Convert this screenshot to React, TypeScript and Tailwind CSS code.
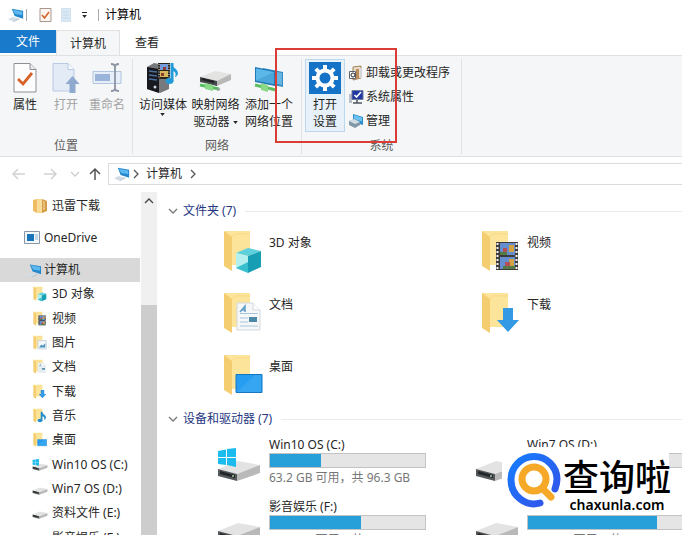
import type { ReactNode } from "react";

type IconProps = { className?: string };

function Monitor({ className = "h-4 w-5" }: IconProps) {
  return (
    <svg viewBox="0 0 20 16" className={className} aria-hidden="true">
      <path d="M5 1.500 17 3.500v8.500L8 9z" fill="#2487cc" />
      <path d="M6 2.500 16 4.200v4L8.500 7z" fill="#5cb8ee" />
      <path d="M1 12.500 6 10l7 2-6 3z" fill="#d3dde5" />
      <path d="M7 15l6-3" stroke="#b4c1cb" strokeWidth="1" />
    </svg>
  );
}

function CheckPage({ className = "h-8 w-6" }: IconProps) {
  return (
    <svg viewBox="0 0 24 32" className={className} aria-hidden="true">
      <path d="M1 1.500h16l6 6V30H1z" fill="#fdfdfd" stroke="#8d9096" />
      <path d="M17 1.500v6h6" fill="#e8eaed" stroke="#8d9096" />
      <path d="M5 17l5 5 9-11" fill="none" stroke="#d86127" strokeWidth="2.800" />
    </svg>
  );
}

function SmallCheck() {
  return (
    <svg viewBox="0 0 13 16" className="h-4 w-[13px]" aria-hidden="true">
      <path d="M1 1.500h11v13H1z" fill="#fdf6f0" stroke="#a8978c" />
      <path d="M3 8l2.500 3L10 5" fill="none" stroke="#d86127" strokeWidth="1.600" />
    </svg>
  );
}

function OpenPage() {
  return (
    <svg viewBox="0 0 28 32" className="h-8 w-7" aria-hidden="true">
      <path d="M1 1.500h15l6 6V29H1z" fill="#e3ebf7" stroke="#b9c9e2" />
      <path d="M16 1.500v6h6" fill="#f6f9fd" stroke="#b9c9e2" />
      <path d="M20.500 14l7 8h-4v9h-6v-9h-4z" fill="#90a9cf" />
    </svg>
  );
}

function RenameIcon() {
  return (
    <svg viewBox="0 0 30 32" className="h-8 w-8" aria-hidden="true">
      <path d="M1 9.500h28v12H1z" fill="#e6eefa" stroke="#b3c5df" />
      <path d="M3 12h15v7H3z" fill="#9bb4d9" />
      <path d="M19 2c3 0 4 1 4 3v21c0 2-1 3-4 3m8-27c-3 0-4 1-4 3m0 21c0 2 1 3 4 3" fill="none" stroke="#8b95a5" strokeWidth="1.800" />
    </svg>
  );
}

function MediaIcon() {
  return (
    <svg viewBox="0 0 34 32" className="h-8 w-[34px]" aria-hidden="true">
      <path d="M1 5 8 1l15 3v23l-9 4L1 27z" fill="#77797d" />
      <path d="M1 5l12 2v24L1 27z" fill="#17191e" />
      <path d="M3 9l8 1M3 13l8 1M3 17l8 1" stroke="#4b6f9d" strokeWidth="1.500" />
      <circle cx="9" cy="25" r="1.500" fill="#ccd4dc" />
      <path d="M12 1h12v16H12z" fill="#28251f" />
      <path d="M14 2h8v6h-8z" fill="#759bdc" />
      <path d="M14 9h8v6h-8z" fill="#d5b85c" />
      <path d="M13 2v14m10-14v14" stroke="#eee" strokeDasharray="1 1.500" />
      <path d="M17 5h3v3h-3zm-2 6h3v3h-3z" fill="#8b3b30" />
      <path d="M26 1v18" stroke="#249bd9" strokeWidth="3" />
      <ellipse cx="23.500" cy="19" rx="4" ry="3" fill="#249bd9" />
      <path d="M25 1c1 5 7 5 7 11-1 2-2 3-3 3 2-5-1-6-4-6z" fill="#249bd9" />
    </svg>
  );
}

function NetDrive() {
  return (
    <svg viewBox="0 0 34 32" className="h-8 w-[34px]" aria-hidden="true">
      <path d="M1 15 16 9l16 3-14 7z" fill="#e3e3e2" />
      <path d="M18 19l14-7v6l-14 6z" fill="#b8b8b7" />
      <path d="M1 15l17 4v5L1 20z" fill="#45484b" />
      <path d="M3 17l12 3" stroke="#1e2021" strokeWidth="2" />
      <path d="M1 23l19 4" stroke="#58bd62" strokeWidth="3" />
      <path d="M6 21l8 2v6l-8-2z" fill="#88d987" />
      <path d="M18 28l3-1" stroke="#9ca4a7" strokeWidth="2" />
    </svg>
  );
}

function NetPlace() {
  return (
    <svg viewBox="0 0 32 32" className="h-8 w-8" aria-hidden="true">
      <path d="M10 6l20 4v15l-20-4z" fill="#348cc6" />
      <path d="M11 7l18 4v12l-18-4z" fill="#66b5e2" />
      <path d="M2 5l20 4v15L2 20z" fill="#2278b4" />
      <path d="M3 6.500l18 3.500v12L3 18.500z" fill="#5cb8e9" />
      <path d="M3 18.500 21 10v12z" fill="#4aa6db" />
      <path d="M2 23l21 5" stroke="#5fbd64" strokeWidth="3" />
      <path d="M8 21l7 2v7l-7-2z" fill="#8bd887" />
    </svg>
  );
}

function Gear() {
  return (
    <svg viewBox="0 0 32 32" className="h-8 w-8" aria-hidden="true">
      <path d="M0 0h32v32H0z" fill="#1473c7" />
      <g fill="#fff">
        <path d="M14 3h4v6h-4zm0 20h4v6h-4zM3 14h6v4H3zm20 0h6v4h-6z" />
        <path d="M14 3h4v6h-4zm0 20h4v6h-4zM3 14h6v4H3zm20 0h6v4h-6z" transform="rotate(45 16 16)" />
      </g>
      <circle cx="16" cy="16" r="7.500" fill="none" stroke="#fff" strokeWidth="4" />
    </svg>
  );
}

function UninstallIcon() {
  return (
    <svg viewBox="0 0 16 16" className="size-4" aria-hidden="true">
      <path d="M5 2 13 1v12l-8 2z" fill="#e8ddcb" stroke="#a5835b" />
      <path d="M8 4h3v10H8z" fill="#bc8b5c" />
      <path d="M1.500 6.500h6v7h-6z" fill="#fff" stroke="#5b6269" />
      <circle cx="5" cy="10" r="2" fill="none" stroke="#25292c" />
      <path d="M13 3v10" stroke="#d2d6d9" strokeWidth="2" />
    </svg>
  );
}

function PropertiesIcon() {
  return (
    <svg viewBox="0 0 16 16" className="size-4" aria-hidden="true">
      <path d="M1 5h3v9H1z" fill="#b9bec8" />
      <path d="M4 1.500h11v9H4z" fill="#2137a3" stroke="#717b9b" />
      <path d="M6.500 6l2 2L13 3" fill="none" stroke="#fff" strokeWidth="1.700" />
      <path d="M9 11v3m-4 0h9" stroke="#4f5460" strokeWidth="1.500" />
    </svg>
  );
}

function ManageIcon() {
  return (
    <svg viewBox="0 0 16 16" className="size-4" aria-hidden="true">
      <path d="M5 1l10 3v8L5 9z" fill="#2d8bca" />
      <path d="M6 2l8 2.500v4L6 6z" fill="#6bc1ed" />
      <path d="M1 8l5-2 6 3v3l-5 3-6-3z" fill="#8198a8" />
      <path d="M1 8l5-2 6 3-5 2z" fill="#d0dce3" />
    </svg>
  );
}

type FolderKind = "cube" | "video" | "doc" | "download" | "desktop" | "picture" | "music";

function Folder({ kind, className = "h-11 w-10" }: { kind: FolderKind; className?: string }) {
  return (
    <svg viewBox="0 0 40 44" className={className} aria-hidden="true">
      <path d="M1 1h26v34H9z" fill="#fce49a" />
      <path d="M1 1l8 6v34L1 36z" fill="#f4cd70" />
      <path d="M9 7 12 4h15" fill="none" stroke="#f8d985" />
      {kind === "cube" && (
        <g>
          <path d="M13 23l12-5 13 3-13 5z" fill="#5dd0dc" />
          <path d="M13 23l12 3v17l-12-5z" fill="#b3f0ef" />
          <path d="M25 26l13-5v16l-13 6z" fill="#159eb4" />
          <path d="M13 38l12-6v11z" fill="#38bfce" />
        </g>
      )}
      {kind === "video" && (
        <g>
          <path d="M15 12h22v28H15z" fill="#3e3c3b" />
          <path d="M19 13h15v12H19zm0 14h15v12H19z" fill="#658ed0" />
          <path d="M28 15h5v7h-5zm0 14h5v7h-5z" fill="#d3a341" />
          <path d="M19 22h7v3h-7zm3 14h12v3H22z" fill="#547b46" />
          <path d="M22 18h4v4h-4zm2 14h5v4h-5z" fill="#b44f58" />
          <path d="M16.500 13v26m19-26v26" stroke="#f5f5f5" strokeWidth="2" strokeDasharray="2" />
        </g>
      )}
      {kind === "doc" && (
        <g>
          <path d="M14 11h16l7 7v20H14z" fill="#f5f7f9" stroke="#d3d9df" />
          <path d="M30 11v7h7" fill="#fff" stroke="#d3d9df" />
          <path d="M17 20l5-6v6m-3-2h3" fill="none" stroke="#5d9fc8" strokeWidth="1.500" />
          <path d="M17 21.500h18M17 26h8m-8 4h8m-8 4h18" stroke="#a9c5d7" />
          <path d="M26 25h8v5h-8z" fill="#4c89a8" />
        </g>
      )}
      {kind === "download" && <path d="M22 16h10v12h6L27 40 16 28h6z" fill="#3499e5" />}
      {kind === "desktop" && (
        <g>
          <path d="M13 20.500h26v18H13z" fill="#269df0" stroke="#1677bf" />
          <path d="M14 38 32 21h6v17z" fill="#48b0f4" opacity=".5" />
        </g>
      )}
      {kind === "picture" && (
        <g>
          <path d="M14 15h24v24H14z" fill="#f3f8fb" stroke="#b5c8d4" strokeWidth="2" />
          <path d="M17 35l7-9 4 4 7-7v12z" fill="#4b91bc" />
        </g>
      )}
      {kind === "music" && (
        <g fill="#248fd0">
          <ellipse cx="20" cy="35" rx="7" ry="5" />
          <path d="M22 10h5c0 8 11 9 10 17-1 4-3 6-5 7 2-8-2-10-5-11v12h-5z" />
        </g>
      )}
    </svg>
  );
}

function Drive({ windows = false, className = "h-[34px] w-[42px]" }: IconProps & { windows?: boolean }) {
  return (
    <svg viewBox="0 0 42 34" className={className} aria-hidden="true">
      <path d="M0 21 20 13l22 4-23 9z" fill="#e3e3e3" />
      <path d="M19 26l23-9v8l-23 8z" fill="#b9b9b9" />
      <path d="M0 21l19 5v7L0 28z" fill="#55585a" />
      <path d="M2 23l15 4v3L2 26z" fill="#242729" />
      <circle cx="15" cy="28" r="1" fill="#a9c9a1" />
      {windows && (
        <path d="M0 3l8-1.500V9H0zm9-2L18 0v9H9zM0 10h8v7l-8-1zm9 0h9v9l-9-2z" fill="#1cbbed" />
      )}
    </svg>
  );
}

function Bundle() {
  return (
    <svg viewBox="0 0 16 16" className="size-4" aria-hidden="true">
      <path d="M1 2l4-1v14l-4-2z" fill="#eebc63" />
      <path d="M5 1h5v14H5z" fill="#f9d88d" />
      <path d="M10 1l5 2v10l-5 2z" fill="#d79b45" />
      <path d="M6 3v10m3-11v12m3-11v9" stroke="#f7e3b3" />
    </svg>
  );
}

function OneDriveIcon() {
  return (
    <svg viewBox="0 0 16 14" className="h-[14px] w-4" aria-hidden="true">
      <path d="M.5.5h15v12H.5z" fill="#f4f7fa" stroke="#8795a4" />
      <path d="M3 3h7v7H3z" fill="#1974b9" />
      <path d="M11 4h3m-3 2h3m-3 2h3" stroke="#93b8d3" />
    </svg>
  );
}

function Chevron({ className = "", d }: { className?: string; d: string }) {
  return (
    <svg viewBox="0 0 10 10" className={`size-[10px] shrink-0 ${className}`} fill="none" stroke="currentColor" strokeWidth="1.300" aria-hidden="true">
      <path d={d} />
    </svg>
  );
}

const right = "M3 1l4 4-4 4";
const down = "M1 3l4 4 4-4";
const up = "M1 7l4-4 4 4";

function Arrow({ d, className = "" }: { d: string; className?: string }) {
  return (
    <svg viewBox="0 0 14 14" className={`size-[14px] ${className}`} fill="none" stroke="currentColor" strokeWidth="1.500" aria-hidden="true">
      <path d={d} />
    </svg>
  );
}

function Triangle() {
  return (
    <svg viewBox="0 0 6 4" className="inline-block h-[3px] w-[5px]" aria-hidden="true">
      <path d="M0 0h6L3 4z" fill="#222" />
    </svg>
  );
}

function BigButton({ icon, children, className = "" }: { icon: ReactNode; children: ReactNode; className?: string }) {
  return (
    <button type="button" className={`flex shrink-0 flex-col items-center gap-[2px] border pt-[2px] leading-[17px] whitespace-nowrap ${className}`}>
      {icon}
      <span>{children}</span>
    </button>
  );
}

function Group({ title, children, className }: { title: string; children: ReactNode; className: string }) {
  return (
    <section className={`flex shrink-0 flex-col border-r border-[#dfe2e5] ${className}`}>
      <div className="flex h-[81px] items-start">{children}</div>
      <h2 className="text-center leading-4 text-[#5d5d5d]">{title}</h2>
    </section>
  );
}

const sideItems: { label: string; icon: ReactNode }[] = [
  { label: "3D 对象", icon: <Folder kind="cube" className="h-4 w-[14px]" /> },
  { label: "视频", icon: <Folder kind="video" className="h-4 w-[14px]" /> },
  { label: "图片", icon: <Folder kind="picture" className="h-4 w-[14px]" /> },
  { label: "文档", icon: <Folder kind="doc" className="h-4 w-[14px]" /> },
  { label: "下载", icon: <Folder kind="download" className="h-4 w-[14px]" /> },
  { label: "音乐", icon: <Folder kind="music" className="h-4 w-[14px]" /> },
  { label: "桌面", icon: <Folder kind="desktop" className="h-4 w-[14px]" /> },
  { label: "Win10 OS (C:)", icon: <Drive windows className="h-3 w-4" /> },
  { label: "Win7 OS (D:)", icon: <Drive className="h-3 w-4" /> },
  { label: "资料文件 (E:)", icon: <Drive className="h-3 w-4" /> },
  { label: "影音娱乐 (F:)", icon: <Drive className="h-3 w-4" /> },
];

const folders: { label: string; kind: FolderKind }[] = [
  { label: "3D 对象", kind: "cube" },
  { label: "视频", kind: "video" },
  { label: "文档", kind: "doc" },
  { label: "下载", kind: "download" },
  { label: "桌面", kind: "desktop" },
];

const drives = [
  { label: "Win10 OS (C:)", used: 33, space: "63.2 GB 可用，共 96.3 GB", windows: true },
  { label: "Win7 OS (D:)", used: 40, space: "", windows: false },
  { label: "影音娱乐 (F:)", used: 59, space: "80.1 GB 可用，共 198 GB", windows: false },
  { label: "", used: 83, space: "9.70 GB 可用，共 88.0 GB", windows: false },
];

function SectionHeader({ children }: { children: ReactNode }) {
  return (
    <h2 className="flex h-5 items-center gap-[5px] text-[#24377f]">
      <Chevron d={down} className="text-[#777]" />
      <span>{children}</span>
      <span className="ml-1 h-px flex-1 bg-[#e9ebee]" />
    </h2>
  );
}

function Watermark() {
  return (
    <div className="absolute right-[13px] bottom-5 flex h-[68px] w-[167px] items-center bg-white pl-[5px]">
      <svg viewBox="0 0 56 60" className="h-[60px] w-14 shrink-0" fill="none" strokeLinecap="round" aria-hidden="true">
        <path d="M33 52C19 56 4 45 4 29a23 23 0 0 1 46-1c0 4-1 7-2 10" stroke="url(#ring)" strokeWidth="7" />
        <circle cx="27" cy="28" r="12" stroke="#f6a928" strokeWidth="7" />
        <path d="M35 37l9 9" stroke="#f6a928" strokeWidth="7" />
        <defs>
          <linearGradient id="ring" x1="0" y1="0" x2="1" y2="1">
            <stop stopColor="#167cff" />
            <stop offset="1" stopColor="#3452e8" />
          </linearGradient>
        </defs>
      </svg>
      <div className="flex flex-1 flex-col items-center pt-[3px] text-black">
        <span className="font-['Noto_Sans_CJK_SC',sans-serif] text-[36px] leading-[44px] font-medium whitespace-nowrap">查询啦</span>
        <span className="text-[14px] leading-[16px] font-semibold">chaxunla.com</span>
      </div>
    </div>
  );
}

export default function App() {
  return (
    <div className="relative flex h-screen flex-col overflow-hidden bg-white font-['Noto_Sans','Noto_Sans_CJK_SC',sans-serif] text-[12px] text-[#262626]">
      <header className="flex h-[30px] shrink-0 items-center pl-[7px]">
        <Monitor className="h-4 w-[19px]" />
        <span className="h-3 w-px bg-[#aaa]" />
        <button type="button" aria-label="属性" className="ml-3"><SmallCheck /></button>
        <button type="button" aria-label="新建" className="ml-[9px]">
          <svg viewBox="0 0 10 14" className="h-[14px] w-[10px]" aria-hidden="true">
            <path d="M.5.5h9v13h-9z" fill="#dbe9f5" stroke="#d0e0ee" />
            <path d="M2 4h6M2 7h6m-6 3h6" stroke="#c2d8ea" />
          </svg>
        </button>
        <button type="button" aria-label="自定义" className="ml-[10px] flex w-[6px] flex-col items-center gap-[2px]">
          <span className="h-px w-[5px] bg-[#222]" />
          <Triangle />
        </button>
        <span className="ml-[11px] h-3 w-px bg-[#aaa]" />
        <h1 className="ml-[6px] text-black">计算机</h1>
      </header>

      <nav className="flex h-[25px] shrink-0 items-start">
        <button type="button" className="h-[23px] w-14 bg-[#1979ca] pt-px text-white">文件</button>
        <button type="button" className="h-[26px] w-16 border border-b-0 border-[#dfe2e5] bg-[#f5f6f7]">计算机</button>
        <button type="button" className="h-[25px] w-[54px]">查看</button>
      </nav>

      <div className="flex h-[102px] shrink-0 border-y border-[#dfe2e5] bg-[#f5f6f7] pt-[3px] pb-[2px]">
        <Group title="位置" className="w-[133px]">
          <BigButton icon={<CheckPage />} className="ml-[5px] w-10 border-transparent">属性</BigButton>
          <BigButton icon={<OpenPage />} className="w-[42px] border-transparent text-[#a3a3a3]">打开</BigButton>
          <BigButton icon={<RenameIcon />} className="w-10 border-transparent text-[#a3a3a3]">重命名</BigButton>
        </Group>
        <Group title="网络" className="w-[169px]">
          <BigButton icon={<MediaIcon />} className="ml-1 w-[52px] border-transparent">
            访问媒体
            <span className="flex h-1 justify-center"><Triangle /></span>
          </BigButton>
          <BigButton icon={<NetDrive />} className="w-[53px] border-transparent">
            映射网络<br />驱动器 <Triangle />
          </BigButton>
          <BigButton icon={<NetPlace />} className="w-[54px] border-transparent">
            添加一个<br />网络位置
          </BigButton>
        </Group>
        <Group title="系统" className="w-40">
          <BigButton icon={<Gear />} className="ml-[3px] h-[73px] w-10 border-[#bcd8ee] bg-[#e8f1f9]">
            打开<br />设置
          </BigButton>
          <div className="ml-[3px] flex flex-col pt-[2px]">
            <button type="button" className="flex h-6 items-center gap-[2px]"><UninstallIcon />卸载或更改程序</button>
            <button type="button" className="flex h-6 items-center gap-[2px]"><PropertiesIcon />系统属性</button>
            <button type="button" className="flex h-6 items-center gap-[2px]"><ManageIcon />管理</button>
          </div>
        </Group>
      </div>

      <div className="flex h-[33px] shrink-0 items-center pt-[1px]">
        <button type="button" aria-label="后退" className="ml-3 text-[#d2d2d2]"><Arrow d="M13 7H1m5-5L1 7l5 5" /></button>
        <button type="button" aria-label="前进" className="ml-[17px] text-[#d2d2d2]"><Arrow d="M1 7h12M8 2l5 5-5 5" /></button>
        <button type="button" aria-label="最近" className="ml-[13px] text-[#ccc]"><Chevron d={down} /></button>
        <button type="button" aria-label="上移" className="ml-[8px] text-[#555]"><Arrow d="M7 13V2M2 7l5-5 5 5" /></button>
        <div className="ml-[6px] flex h-[22px] flex-1 items-center border border-r-0 border-[#dcdcdc] pl-1">
          <Monitor className="h-4 w-[19px]" />
          <Chevron d={right} className="-ml-px text-[#555]" />
          <button type="button" className="ml-[5px]">计算机</button>
          <Chevron d={right} className="ml-[6px] text-[#555]" />
        </div>
      </div>

      <div className="flex min-h-0 flex-1">
        <aside className="w-[141px] shrink-0 overflow-hidden pt-1">
          <button type="button" className="flex h-6 w-full items-center gap-1 pl-8"><Bundle />迅雷下载</button>
          <button type="button" className="mt-2 flex h-6 w-full items-center gap-1 pl-6"><OneDriveIcon />OneDrive</button>
          <button type="button" className="mt-2 flex h-6 w-[140px] items-center bg-[#d9d9d9] pl-[25px]"><Monitor className="h-[15px] w-[19px]" />计算机</button>
          <ul className="grid h-[268px] grid-rows-11">
            {sideItems.map((item) => (
              <li key={item.label}>
                <button type="button" className="flex h-full w-full items-center pl-8 whitespace-nowrap">
                  <span className="flex w-5 justify-center pr-1">{item.icon}</span>{item.label}
                </button>
              </li>
            ))}
          </ul>
        </aside>
        <div className="mt-[2px] flex w-4 shrink-0 flex-col bg-[#f0f0f0]">
          <button type="button" aria-label="向上滚动" className="flex h-[17px] items-center justify-center text-[#444]"><Chevron d={up} /></button>
          <div className="mt-24 flex-1 bg-[#cdcdcd]" />
        </div>
        <main className="min-w-0 flex-1 overflow-hidden pt-[11px] pl-[11px]">
          <SectionHeader>文件夹 (7)</SectionHeader>
          <ul className="grid auto-rows-[62px] grid-cols-[258px_258px] pt-[9px] pl-[55px]">
            {folders.map((folder) => (
              <li key={folder.label}>
                <button type="button" className="flex items-start gap-[6px]">
                  <Folder kind={folder.kind} />
                  <span className="pt-1">{folder.label}</span>
                </button>
              </li>
            ))}
          </ul>
          <div className="-mt-[7px]">
            <SectionHeader>设备和驱动器 (7)</SectionHeader>
          </div>
          <ul className="grid auto-rows-[62px] grid-cols-[258px_258px] pt-[7px] pl-[50px]">
            {drives.map((drive) => (
              <li key={drive.space} className="flex items-start gap-[9px]">
                <Drive windows={drive.windows} className="mt-3 h-[34px] w-[42px]" />
                <div className="w-[157px]">
                  <div className="h-[17px] leading-[17px]">{drive.label}</div>
                  <div className="h-[15px] border border-[#c3c3c3] bg-[#e5e5e5]">
                    <div className="h-full bg-[#279fd9]" style={{ width: `${drive.used}%` }} />
                  </div>
                  <div className="leading-[19px] whitespace-nowrap text-[#777]">{drive.space}</div>
                </div>
              </li>
            ))}
          </ul>
        </main>
      </div>

      <div className="pointer-events-none absolute top-12 left-[275px] h-[95px] w-[122px] border-2 border-[#dc3c36]" />
      <Watermark />
    </div>
  );
}
